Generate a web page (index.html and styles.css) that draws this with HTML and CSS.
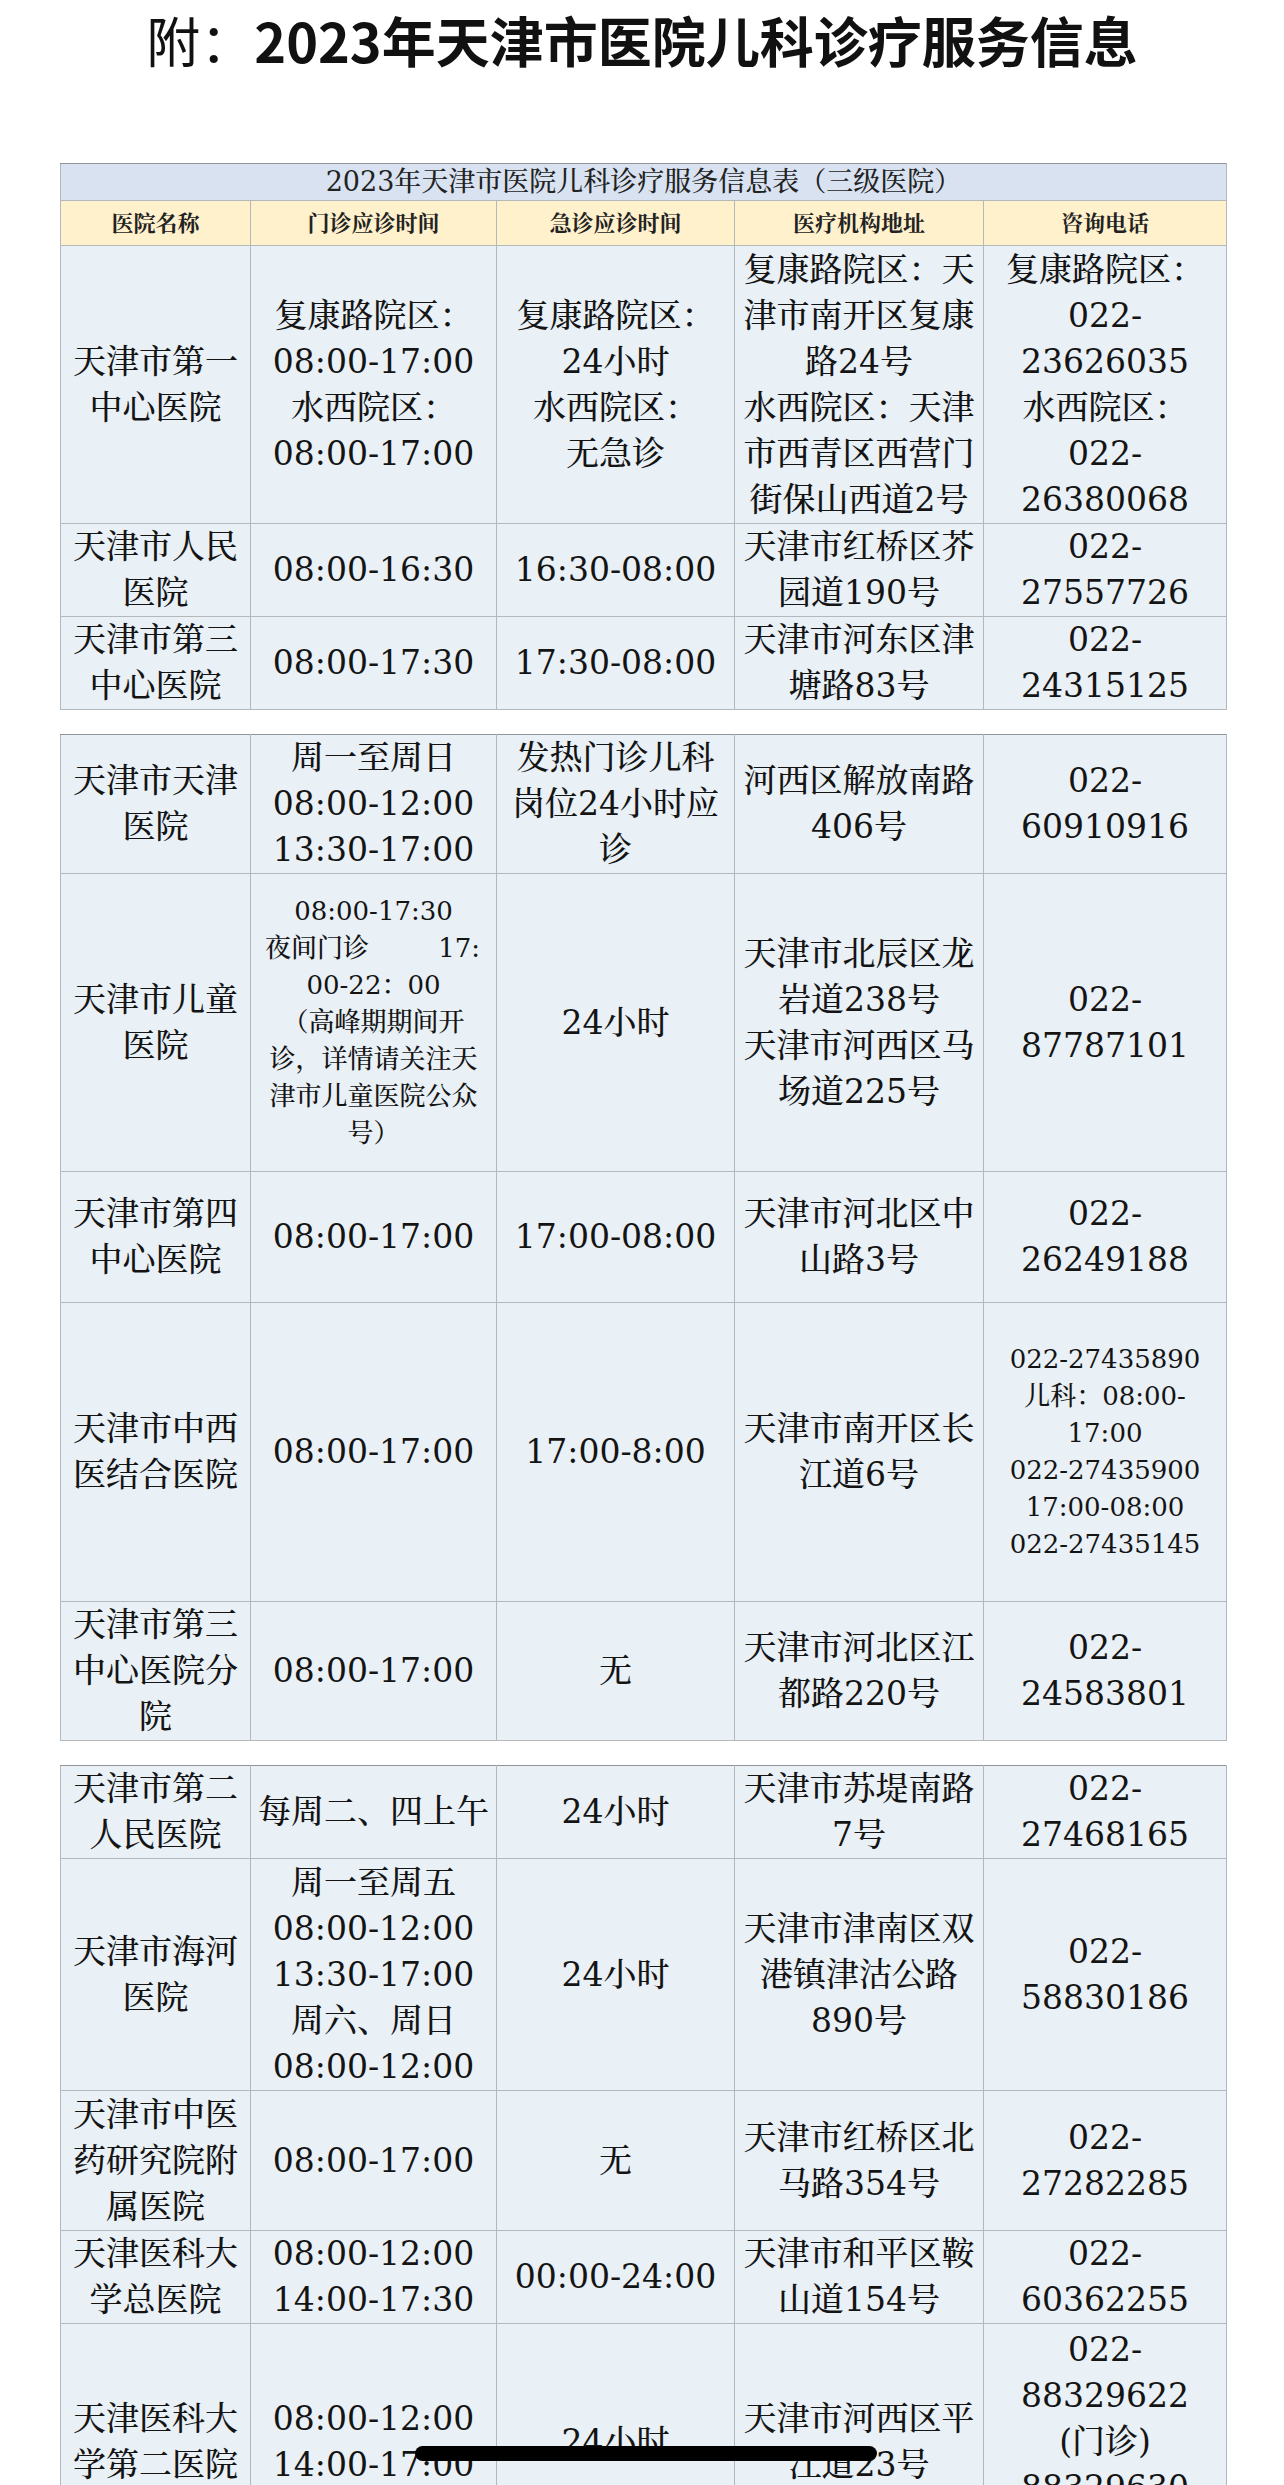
FILE: index.html
```html
<!DOCTYPE html>
<html lang="zh-CN">
<head>
<meta charset="utf-8">
<title>2023年天津市医院儿科诊疗服务信息</title>
<link rel="stylesheet" href="styles.css">
</head>
<body>
<h1 class="page-title"><span class="lead">附：</span>2023年天津市医院儿科诊疗服务信息</h1>

<div class="sheet">
  <table class="grid">
    <colgroup><col class="c1"><col class="c2"><col class="c3"><col class="c4"><col class="c5"></colgroup>
    <tr class="caption-row"><td colspan="5">2023年天津市医院儿科诊疗服务信息表（三级医院）</td></tr>
    <tr class="head-row"><th>医院名称</th><th>门诊应诊时间</th><th>急诊应诊时间</th><th>医疗机构地址</th><th>咨询电话</th></tr>
    <tr class="h278">
      <td>天津市第一<br>中心医院</td>
      <td>复康路院区：<br>08:00-17:00<br>水西院区：<br>08:00-17:00</td>
      <td>复康路院区：<br>24小时<br>水西院区：<br>无急诊</td>
      <td>复康路院区：天<br>津市南开区复康<br>路24号<br>水西院区：天津<br>市西青区西营门<br>街保山西道2号</td>
      <td>复康路院区：<br>022-<br>23626035<br>水西院区：<br>022-<br>26380068</td>
    </tr>
    <tr class="h92">
      <td>天津市人民<br>医院</td>
      <td>08:00-16:30</td>
      <td>16:30-08:00</td>
      <td>天津市红桥区芥<br>园道190号</td>
      <td>022-<br>27557726</td>
    </tr>
    <tr class="h93">
      <td>天津市第三<br>中心医院</td>
      <td>08:00-17:30</td>
      <td>17:30-08:00</td>
      <td>天津市河东区津<br>塘路83号</td>
      <td>022-<br>24315125</td>
    </tr>
  </table>

  <table class="grid">
    <colgroup><col class="c1"><col class="c2"><col class="c3"><col class="c4"><col class="c5"></colgroup>
    <tr class="h139">
      <td>天津市天津<br>医院</td>
      <td>周一至周日<br>08:00-12:00<br>13:30-17:00</td>
      <td>发热门诊儿科<br>岗位24小时应<br>诊</td>
      <td>河西区解放南路<br>406号</td>
      <td>022-<br>60910916</td>
    </tr>
    <tr class="h298">
      <td>天津市儿童<br>医院</td>
      <td class="small">08:00-17:30<br><span class="spread"><span>夜间门诊</span><span>17:</span></span>00-22：00<br>（高峰期期间开<br>诊，详情请关注天<br>津市儿童医院公众<br>号）</td>
      <td>24小时</td>
      <td>天津市北辰区龙<br>岩道238号<br>天津市河西区马<br>场道225号</td>
      <td>022-<br>87787101</td>
    </tr>
    <tr class="h131">
      <td>天津市第四<br>中心医院</td>
      <td>08:00-17:00</td>
      <td>17:00-08:00</td>
      <td>天津市河北区中<br>山路3号</td>
      <td>022-<br>26249188</td>
    </tr>
    <tr class="h299">
      <td>天津市中西<br>医结合医院</td>
      <td>08:00-17:00</td>
      <td>17:00-8:00</td>
      <td>天津市南开区长<br>江道6号</td>
      <td class="small">022-27435890<br>儿科：08:00-<br>17:00<br>022-27435900<br>17:00-08:00<br>022-27435145</td>
    </tr>
    <tr class="h139">
      <td>天津市第三<br>中心医院分<br>院</td>
      <td>08:00-17:00</td>
      <td>无</td>
      <td>天津市河北区江<br>都路220号</td>
      <td>022-<br>24583801</td>
    </tr>
  </table>

  <table class="grid">
    <colgroup><col class="c1"><col class="c2"><col class="c3"><col class="c4"><col class="c5"></colgroup>
    <tr class="h92">
      <td>天津市第二<br>人民医院</td>
      <td>每周二、四上午</td>
      <td>24小时</td>
      <td>天津市苏堤南路<br>7号</td>
      <td>022-<br>27468165</td>
    </tr>
    <tr class="h232">
      <td>天津市海河<br>医院</td>
      <td>周一至周五<br>08:00-12:00<br>13:30-17:00<br>周六、周日<br>08:00-12:00</td>
      <td>24小时</td>
      <td>天津市津南区双<br>港镇津沽公路<br>890号</td>
      <td>022-<br>58830186</td>
    </tr>
    <tr class="h140">
      <td>天津市中医<br>药研究院附<br>属医院</td>
      <td>08:00-17:00</td>
      <td>无</td>
      <td>天津市红桥区北<br>马路354号</td>
      <td>022-<br>27282285</td>
    </tr>
    <tr class="h93">
      <td>天津医科大<br>学总医院</td>
      <td>08:00-12:00<br>14:00-17:30</td>
      <td>00:00-24:00</td>
      <td>天津市和平区鞍<br>山道154号</td>
      <td>022-<br>60362255</td>
    </tr>
    <tr class="h237">
      <td>天津医科大<br>学第二医院</td>
      <td>08:00-12:00<br>14:00-17:00</td>
      <td>24小时</td>
      <td>天津市河西区平<br>江道23号</td>
      <td>022-<br>88329622<br>(门诊)<br>88329630<br>(急诊)</td>
    </tr>
  </table>
</div>

<div class="home-bar"></div>
</body>
</html>
```

FILE: styles.css
```css
html, body {
  margin: 0;
  padding: 0;
  background: #ffffff;
}

body {
  position: relative;
  width: 1284px;
  height: 2485px;
  overflow: hidden;
  color: #141414;
  font-family: "DejaVu Serif", "Noto Serif CJK SC", "Noto Sans CJK SC", serif;
}

.page-title {
  margin: 0;
  padding-top: 8px;
  height: 64px;
  line-height: 64px;
  text-align: center;
  font-family: "Noto Sans CJK SC", "Noto Sans", sans-serif;
  font-weight: 700;
  font-size: 54px;
  color: #111111;
}

.page-title .lead {
  font-weight: 400;
}

.sheet {
  margin-top: 91px;
  margin-left: 60px;
  width: 1166px;
  display: flex;
  flex-direction: column;
  gap: 24px;
}

.grid {
  width: 1166px;
  border-collapse: collapse;
  table-layout: fixed;
  border: 1px solid #8f949a;
}

.c1 { width: 190px; }
.c2 { width: 246px; }
.c3 { width: 238px; }
.c4 { width: 249px; }
.c5 { width: 243px; }

.grid td,
.grid th {
  border: 1px solid #b3b8bd;
  padding: 0 2px;
  text-align: center;
  vertical-align: middle;
  background: #e9f0f6;
  font-size: 33px;
  line-height: 46px;
  font-weight: 500;
  white-space: nowrap;
}

.grid tr:first-child td,
.grid tr:first-child th {
  border-top-color: #8f949a;
}

.caption-row td {
  height: 36px;
  background: #d9e2f1;
  font-size: 27px;
  line-height: 36px;
  color: #222222;
}

.head-row th {
  height: 44px;
  background: #fff1cc;
  font-size: 22px;
  line-height: 44px;
  font-weight: 700;
  color: #222222;
}

.grid td.small {
  font-size: 26px;
  line-height: 37px;
}

.spread {
  display: flex;
  justify-content: space-between;
  padding: 0 14px 0 12px;
}

.h92 td { height: 91px; }
.h93 td { height: 92px; }
.h131 td { height: 130px; }
.h139 td { height: 138px; }
.h140 td { height: 139px; }
.h232 td { height: 231px; }
.h237 td { height: 236px; }
.h278 td { height: 277px; }
.h298 td { height: 297px; }
.h299 td { height: 298px; }

.home-bar {
  position: absolute;
  left: 415px;
  top: 2446px;
  width: 462px;
  height: 15px;
  border-radius: 8px;
  background: #000000;
}
```
